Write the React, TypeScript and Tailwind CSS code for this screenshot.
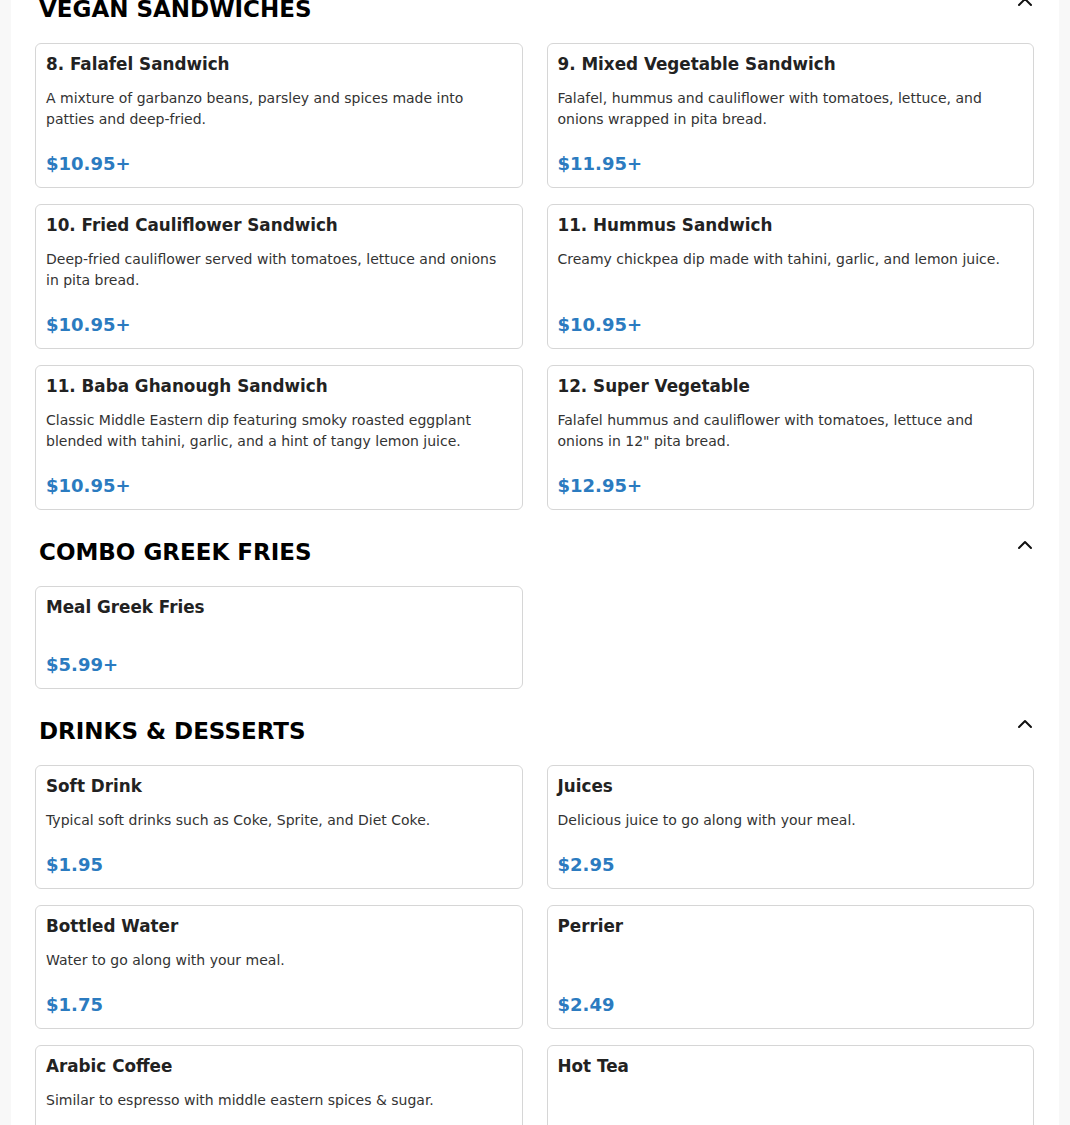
import { ChevronUp } from "lucide-react";

type Item = { name: string; desc?: string; price: string };

const sections: { title: string; items: Item[] }[] = [
    {
        title: "Vegan Sandwiches",
        items: [
            { name: "8. Falafel Sandwich", desc: "A mixture of garbanzo beans, parsley and spices made into patties and deep-fried.", price: "$10.95+" },
            { name: "9. Mixed Vegetable Sandwich", desc: "Falafel, hummus and cauliflower with tomatoes, lettuce, and onions wrapped in pita bread.", price: "$11.95+" },
            { name: "10. Fried Cauliflower Sandwich", desc: "Deep-fried cauliflower served with tomatoes, lettuce and onions in pita bread.", price: "$10.95+" },
            { name: "11. Hummus Sandwich", desc: "Creamy chickpea dip made with tahini, garlic, and lemon juice.", price: "$10.95+" },
            { name: "11. Baba Ghanough Sandwich", desc: "Classic Middle Eastern dip featuring smoky roasted eggplant blended with tahini, garlic, and a hint of tangy lemon juice.", price: "$10.95+" },
            { name: "12. Super Vegetable", desc: "Falafel hummus and cauliflower with tomatoes, lettuce and onions in 12\" pita bread.", price: "$12.95+" },
        ],
    },
    {
        title: "Combo Greek Fries",
        items: [{ name: "Meal Greek Fries", price: "$5.99+" }],
    },
    {
        title: "Drinks & Desserts",
        items: [
            { name: "Soft Drink", desc: "Typical soft drinks such as Coke, Sprite, and Diet Coke.", price: "$1.95" },
            { name: "Juices", desc: "Delicious juice to go along with your meal.", price: "$2.95" },
            { name: "Bottled Water", desc: "Water to go along with your meal.", price: "$1.75" },
            { name: "Perrier", price: "$2.49" },
            { name: "Arabic Coffee", desc: "Similar to espresso with middle eastern spices & sugar.", price: "$2.49" },
            { name: "Hot Tea", price: "$1.95" },
        ],
    },
];

function MenuCard({ item }: { item: Item }) {
    return (
        <div className="flex flex-col border border-[#d6d6d6] rounded-md bg-white pl-[10px] pr-[13px] pt-[10px] pb-[13px]">
            <h4 className="text-[16.8px] leading-[20px] font-bold text-[#222]">{item.name}</h4>
            <p className="mt-[14px] text-sm leading-[21px] text-[#333]">{item.desc}</p>
            <span className="mt-auto pt-[24px] text-lg leading-[20px] font-bold text-[#2b7bc0]">{item.price}</span>
        </div>
    );
}

export default function App() {
    return (
        <div className="min-h-screen bg-[#f8f8f8] px-[11px] font-['DejaVu_Sans',sans-serif] overflow-hidden">
            <div className="bg-white pl-6 pr-[25px] pb-10 flex flex-col gap-[26px] mt-[-7px]">
                {sections.map((s) => (
                    <section key={s.title} className="flex flex-col gap-[18px]">
                        <div className="flex items-start justify-between pl-[4px]">
                            <h2 className="text-[23px] leading-8 font-bold uppercase text-black">{s.title}</h2>
                            <ChevronUp size={24} strokeWidth={2} className="text-[#111] -mt-[3px] -mr-[3px]" />
                        </div>
                        <div className="grid grid-cols-2 gap-x-6 gap-y-4">
                            {s.items.map((item) => (
                                <MenuCard key={item.name} item={item} />
                            ))}
                        </div>
                    </section>
                ))}
            </div>
        </div>
    );
}
